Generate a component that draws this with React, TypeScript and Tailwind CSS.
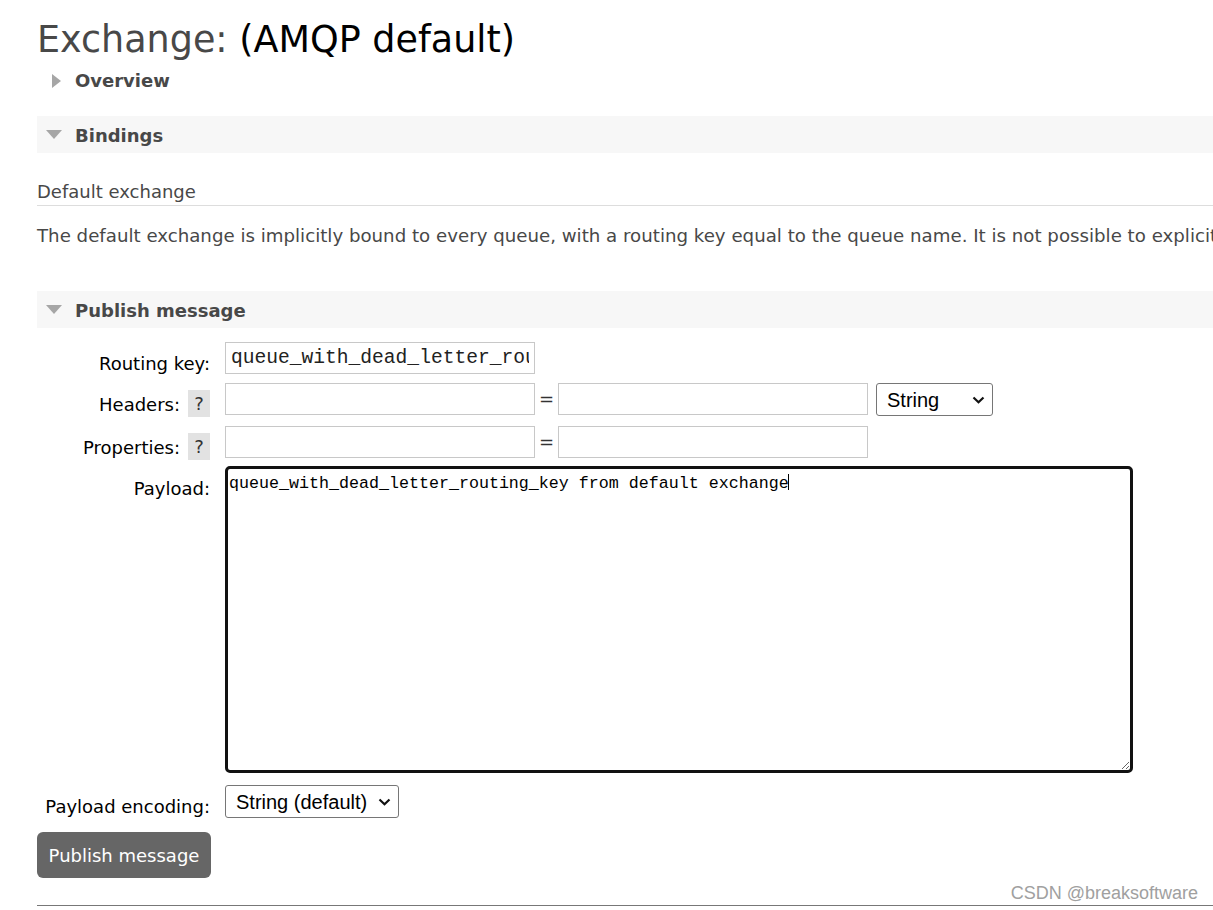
import * as React from 'react';

const sans = "font-['DejaVu_Sans',Verdana,sans-serif]";

function TriangleRight(): JSX.Element {
  return (
    <svg width="9" height="14" viewBox="0 0 9 14" className="shrink-0">
      <polygon points="0,0 9,7 0,14" fill="#a6a6a6" />
    </svg>
  );
}

function TriangleDown(): JSX.Element {
  return (
    <svg width="16" height="9" viewBox="0 0 16 9" className="shrink-0">
      <polygon points="0,0 16,0 8,9" fill="#a6a6a6" />
    </svg>
  );
}

function Chevron(): JSX.Element {
  return (
    <svg width="13" height="8" viewBox="0 0 13 8" className="pointer-events-none absolute top-1/2 right-[8px] -translate-y-1/2">
      <polyline points="1.5,1.5 6.5,6.2 11.5,1.5" fill="none" stroke="#111" strokeWidth="2.2" />
    </svg>
  );
}

function SectionBar({ title }: { title: string }): JSX.Element {
  return (
    <div className="flex h-[37px] items-center bg-[#f7f7f7] pl-[9px]">
      <TriangleDown />
      <h2 className="ml-[13px] pt-[2px] text-[18px] leading-[36px] font-bold text-[#484848]">{title}</h2>
    </div>
  );
}

function HelpBadge(): JSX.Element {
  return (
    <span className="mt-[7px] ml-[8px] flex h-[27px] w-[22px] items-center justify-center bg-[#e2e2e2] text-[18px] text-[#333]">
      ?
    </span>
  );
}

function Label({ text, help, pad = 'pt-[10px]' }: { text: string; help?: boolean; pad?: string }): JSX.Element {
  return (
    <div className="flex w-[173px] shrink-0 justify-end">
      <span className={`${pad} text-[18px] leading-[24px] text-black`}>{text}</span>
      {help ? <HelpBadge /> : null}
    </div>
  );
}

function TextInput({ value = '' }: { value?: string }): JSX.Element {
  return (
    <input
      readOnly
      value={value}
      className="h-[32px] w-[310px] border border-[#c8c8c8] bg-white px-[5px] font-['Liberation_Mono',monospace] text-[19.6px] text-[#222] outline-none"
    />
  );
}

function SelectBox({ label, width }: { label: string; width: string }): JSX.Element {
  return (
    <div className={`relative h-[33px] ${width}`}>
      <select
        defaultValue={label}
        className="h-full w-full appearance-none rounded-[3px] border border-[#767676] bg-white pl-[10px] font-['Liberation_Sans',Arial,sans-serif] text-[20px] text-black outline-none"
      >
        <option>{label}</option>
      </select>
      <Chevron />
    </div>
  );
}

export default function App(): JSX.Element {
  return (
    <div className={`relative min-h-[910px] w-full overflow-hidden bg-white pl-[37px] ${sans}`}>
      <h1 className="mt-[18px] text-[36.5px] leading-[44px] font-normal whitespace-nowrap text-[#484848]">
        Exchange: <span className="text-black">(AMQP default)</span>
      </h1>

      <div className="mt-[7px] flex items-center pl-[15px]">
        <TriangleRight />
        <h2 className="ml-[14px] text-[18px] leading-[24px] font-bold text-[#484848]">Overview</h2>
      </div>

      <div className="mt-[23px]">
        <SectionBar title="Bindings" />
      </div>

      <h3 className="mt-[27px] border-b border-[#dddddd] pb-[1px] text-[18px] leading-[24px] text-[#484848]">
        Default exchange
      </h3>
      <p className="mt-[18px] text-[18.2px] leading-[24px] whitespace-nowrap text-[#484848]">
        The default exchange is implicitly bound to every queue, with a routing key equal to the queue name. It is not
        possible to explicitly bind to, or unbind from the default exchange. It also cannot be deleted.
      </p>

      <div className="mt-[43px]">
        <SectionBar title="Publish message" />
      </div>

      <div className="mt-[14px] flex h-[41px] items-start gap-[15px]">
        <Label text="Routing key:" />
        <TextInput value="queue_with_dead_letter_routing_key" />
      </div>

      <div className="flex h-[43px] items-start gap-[15px]">
        <Label text="Headers:" help />
        <div className="flex items-start">
          <TextInput />
          <span className="w-[23px] pt-[4px] text-center text-[18px] leading-[24px] text-[#333]">=</span>
          <TextInput />
          <div className="ml-[8px]">
            <SelectBox label="String" width="w-[117px]" />
          </div>
        </div>
      </div>

      <div className="flex h-[40px] items-start gap-[15px]">
        <Label text="Properties:" help />
        <div className="flex items-start">
          <TextInput />
          <span className="w-[23px] pt-[4px] text-center text-[18px] leading-[24px] text-[#333]">=</span>
          <TextInput />
        </div>
      </div>

      <div className="flex items-start gap-[15px]">
        <Label text="Payload:" pad="pt-[11px]" />
        <div className="relative">
          <textarea
            defaultValue="queue_with_dead_letter_routing_key from default exchange"
            className="block h-[307px] w-[908px] rounded-[5px] border-[3px] border-[#111] bg-white px-[1px] pt-[2px] font-['Liberation_Mono',monospace] text-[16.67px] text-black outline-none"
          />
          <span className="absolute top-[8px] left-[563px] h-[16px] w-[1px] bg-black" />
        </div>
      </div>

      <div className="mt-[12px] flex items-start gap-[15px]">
        <Label text="Payload encoding:" />
        <SelectBox label="String (default)" width="w-[174px]" />
      </div>

      <button className="mt-[13px] h-[46px] w-[174px] rounded-[6px] bg-[#666666] text-[18px] text-white">
        Publish message
      </button>

      <div className="mt-[27px] border-t border-[#777777]" />

      <span className="absolute top-[883px] right-[15px] font-['Liberation_Sans',Arial,sans-serif] text-[18px] leading-[20px] text-[#a0a0a0]">
        CSDN @breaksoftware
      </span>
    </div>
  );
}
